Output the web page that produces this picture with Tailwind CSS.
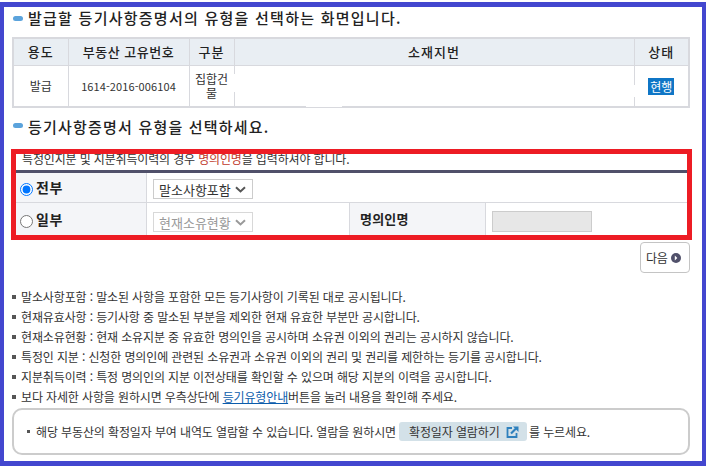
<!DOCTYPE html>
<html lang="ko">
<head>
  <meta charset="UTF-8" />
  <title>등기사항증명서 유형 선택</title>
  <script src="https://cdn.jsdelivr.net/npm/@tailwindcss/browser@4"></script>
</head>
<body class="bg-white">
  <div class="w-[706px] h-[467px] pt-[2px] pb-[1px] overflow-hidden font-['Noto_Sans_CJK_KR',sans-serif] text-[#333]">
    <div class="h-[464px] border-x-4 border-y-[5px] border-[#4347cf] bg-white pl-[8px] pr-[12px]">

      <h2 class="flex items-center h-[22px] text-[15px] font-medium tracking-[1.25px] text-[#222]">
        <span class="w-[10px] h-[5px] rounded-full bg-[#5ba3dc] ml-[1px] mr-[5px]"></span>
        발급할 등기사항증명서의 유형을 선택하는 화면입니다.
      </h2>

      <!-- 기본 정보 표 -->
      <table class="mt-[8px] w-[678px] table-fixed border-collapse border-2 border-[#d8d9de] text-[12px]">
        <thead>
          <tr class="h-[27px] bg-[#e9eef3] text-[13px] text-[#222]">
            <th class="w-[55px] border border-[#d8d9de] font-medium tracking-[1px]">용도</th>
            <th class="w-[121px] border border-[#d8d9de] font-medium tracking-[0.5px]">부동산 고유번호</th>
            <th class="w-[45px] border border-[#d8d9de] font-medium tracking-[1px]">구분</th>
            <th class="border border-[#d8d9de] font-medium tracking-[1px]">소재지번</th>
            <th class="w-[55px] border border-[#d8d9de] font-medium tracking-[1px]">상태</th>
          </tr>
        </thead>
        <tbody>
          <tr class="h-[42px] text-center">
            <td class="border border-[#d8d9de]">발급</td>
            <td class="border border-[#d8d9de] text-[11px] tracking-[0.1px]">1614-2016-006104</td>
            <td class="border border-[#d8d9de] px-[4px] leading-[14px]">집합건물</td>
            <td class="relative border border-[#d8d9de]">
              <!-- 가려진 소재지번 자국 -->
              <span class="absolute -left-[1px] top-[8px] w-[1px] h-[18px] bg-white"></span>
              <span class="absolute -right-[1px] top-[19px] w-[1px] h-[12px] bg-white"></span>
              <span class="absolute -bottom-[1px] left-[71px] w-[36px] h-[2px] bg-white"></span>
            </td>
            <td class="border border-[#d8d9de]">
              <span class="inline-block align-middle w-[26px] h-[17px] bg-[#0f76c6] text-white text-[12px] leading-[17px]">현행</span>
            </td>
          </tr>
        </tbody>
      </table>

      <h2 class="flex items-center h-[22px] mt-[8px] text-[15px] font-medium tracking-[1.2px] text-[#222]">
        <span class="w-[10px] h-[5px] rounded-full bg-[#5ba3dc] ml-[1px] mr-[5px] -mt-[4px]"></span>
        등기사항증명서 유형을 선택하세요.
      </h2>

      <!-- 유형 선택 -->
      <section class="mt-[11px] -ml-[1px] w-[681px] h-[91px] border-[5px] border-[#ed1c24] overflow-hidden">
        <p class="h-[16px] -mt-[3px] pl-[6px] text-[12px] leading-[16px] tracking-[-0.15px]">특정인지분 및 지분취득이력의 경우 <span class="text-[#c0392b]">명의인명</span>을 입력하셔야 합니다.</p>
        <div class="h-[3px] mt-[3px] bg-[#50506a]"></div>
        <div class="grid grid-cols-[131px_203px_136px_1fr] grid-rows-[30px_32px] text-[14px]">
          <label class="flex items-center pl-[4px] bg-[#f4f5f8] border-r border-b border-[#d8d9de] font-bold text-[#222] tracking-[0.5px]">
            <input type="radio" name="scope" checked class="m-0 mt-[4px] mr-[3px] size-[13px]" />전부
          </label>
          <div class="col-span-3 flex items-center pt-[3px] pl-[6px] border-b border-[#d8d9de]">
            <div class="relative w-[100px] h-[20px]">
              <select class="appearance-none w-full h-full border border-[#cccccc] text-[13px] text-[#333] pl-[5px]">
                <option>말소사항포함</option>
              </select>
              <svg class="absolute right-[7px] top-[7px]" width="11" height="7" viewBox="0 0 11 7" fill="none"><path d="M1 1.2 5.5 5.4 10 1.2" stroke="#555" stroke-width="2"/></svg>
            </div>
          </div>
          <label class="flex items-center pl-[4px] bg-[#f4f5f8] border-r border-[#d8d9de] font-bold text-[#222] tracking-[0.5px]">
            <input type="radio" name="scope" class="m-0 mt-[4px] mr-[3px] size-[13px]" />일부
          </label>
          <div class="flex items-center pt-[5px] pl-[6px] border-r border-[#d8d9de]">
            <div class="relative w-[100px] h-[20px]">
              <select disabled class="appearance-none w-full h-full border border-[#d8d8d8] text-[13px] text-[#999] pl-[5px]">
                <option>현재소유현황</option>
              </select>
              <svg class="absolute right-[7px] top-[7px]" width="11" height="7" viewBox="0 0 11 7" fill="none"><path d="M1 1.2 5.5 5.4 10 1.2" stroke="#999" stroke-width="2"/></svg>
            </div>
          </div>
          <div class="flex items-center pl-[10px] bg-[#f4f5f8] border-r border-[#d8d9de] font-bold text-[13px] text-[#222] tracking-[0.2px]">명의인명</div>
          <div class="flex items-center pt-[5px] pl-[6px]">
            <input type="text" disabled class="w-[100px] h-[21px] bg-[#e7e7e7] border border-[#cccccc]" />
          </div>
        </div>
      </section>

      <div class="flex justify-end mt-[2px]">
        <button class="flex items-center gap-[4px] w-[50px] h-[31px] pl-[5px] border border-[#c4c4c4] rounded-[4px] bg-white text-[12px] tracking-[-0.3px] text-[#333]">
          다음
          <svg width="10" height="10" viewBox="0 0 10 10"><circle cx="5" cy="5" r="5" fill="#50506a"/><path d="M3.8 2.6 6.3 5 3.8 7.4Z" fill="#fff"/></svg>
        </button>
      </div>

      <!-- 안내 문구 -->
      <ul class="mt-[14px] text-[12px] leading-[20px] tracking-[-0.13px] text-[#333]">
        <li class="flex items-center"><span class="size-[4px] mr-[5px] bg-[#555]"></span>말소사항포함 : 말소된 사항을 포함한 모든 등기사항이 기록된 대로 공시됩니다.</li>
        <li class="flex items-center"><span class="size-[4px] mr-[5px] bg-[#555]"></span>현재유효사항 : 등기사항 중 말소된 부분을 제외한 현재 유효한 부분만 공시합니다.</li>
        <li class="flex items-center"><span class="size-[4px] mr-[5px] bg-[#555]"></span>현재소유현황 : 현재 소유지분 중 유효한 명의인을 공시하며 소유권 이외의 권리는 공시하지 않습니다.</li>
        <li class="flex items-center"><span class="size-[4px] mr-[5px] bg-[#555]"></span>특정인 지분 : 신청한 명의인에 관련된 소유권과 소유권 이외의 권리 및 권리를 제한하는 등기를 공시합니다.</li>
        <li class="flex items-center"><span class="size-[4px] mr-[5px] bg-[#555]"></span>지분취득이력 : 특정 명의인의 지분 이전상태를 확인할 수 있으며 해당 지분의 이력을 공시합니다.</li>
        <li class="flex items-center"><span class="size-[4px] mr-[5px] bg-[#555]"></span><span>보다 자세한 사항을 원하시면 우측상단에 <a class="text-[#0b5cab] underline">등기유형안내</a>버튼을 눌러 내용을 확인해 주세요.</span></li>
      </ul>

      <div class="flex items-center h-[47px] mt-[1px] pl-[13px] border-2 border-[#cccccc] rounded-[10px] text-[12px] tracking-[-0.12px] text-[#333]">
        <span class="size-[3px] mr-[6px] bg-[#555]"></span>해당 부동산의 확정일자 부여 내역도 열람할 수 있습니다. 열람을 원하시면
        <span class="flex items-center gap-[6px] w-[128px] h-[19px] ml-[3px] mr-[2px] pl-[10px] rounded-[3px] bg-[#d3e1e8]">확정일자 열람하기
          <svg width="13" height="12" viewBox="0 0 13 12" fill="none"><path d="M6 2H1.5v9h9V7" stroke="#2e80bd" stroke-width="1.8"/><path d="M5 7.5 10 2.5" stroke="#2e80bd" stroke-width="2.2"/><path d="M7 0.5H12.5V6Z" fill="#2e80bd"/></svg>
        </span>
        를 누르세요.
      </div>
    </div>
  </div>
</body>
</html>
